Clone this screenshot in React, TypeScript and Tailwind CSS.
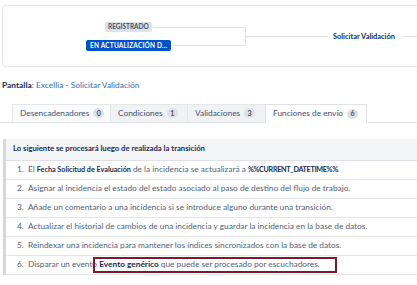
import React from "react";

const Badge = ({ n }: { n: number }) => (
  <span className="ml-[4px] inline-flex h-[10px] min-w-[11px] items-center justify-center rounded-full bg-[#dfe1e6] px-[3px] text-[7px] font-bold text-[#42526e]">
    {n}
  </span>
);

const tabs = [
  { label: "Desencadenadores", count: 0, w: "w-[98px]", bg: "bg-[#fafbfc]" },
  { label: "Condiciones", count: 1, w: "w-[77px]", bg: "bg-[#f1f2f4]" },
  { label: "Validaciones", count: 3, w: "w-[78px]", bg: "bg-[#f1f2f4]" },
];

const rows: React.ReactNode[] = [
  <>
    El <b className="text-[7.2px] text-[#172b4d]">Fecha Solicitud de Evaluación</b> de la incidencia se actualizará a{" "}
    <b className="text-[7.2px] tracking-[-0.3px] text-[#172b4d]">%%CURRENT_DATETIME%%</b>.
  </>,
  <>Asignar al incidencia el estado del estado asociado al paso de destino del flujo de trabajo.</>,
  <>Añade un comentario a una incidencia si se introduce alguno durante una transición.</>,
  <>Actualizar el historial de cambios de una incidencia y guardar la incidencia en la base de datos.</>,
  <>Reindexar una incidencia para mantener los índices sincronizados con la base de datos.</>,
  <>
    Disparar un evento <b className="text-[#172b4d]">Evento genérico</b> que puede ser procesado por escuchadores.
  </>,
];

export default function App() {
  return (
    <div
      className="relative h-[285px] w-[417px] overflow-hidden bg-white text-[#42526e]"
      style={{ fontFamily: "Lato, 'Liberation Sans', sans-serif" }}
    >
      {/* workflow diagram */}
      <div className="ml-[2px] mt-[5px] h-[62px] w-[440px] rounded-[4px] border border-[#e4e6ea]">
        <div className="relative h-full w-full">
          <svg className="absolute left-0 top-0" width="440" height="60">
            <g stroke="#dfe1e6" strokeWidth="1" fill="none">
              <path d="M150 21.5 H242.5 V39.5 H170" />
              <path d="M242.5 30.5 H325" />
              <path d="M399 30.5 H440" />
            </g>
          </svg>
          <span className="absolute left-[102px] top-[16px] flex h-[10px] items-center rounded-[2px] bg-[#dfe1e6] px-[3px] text-[6.5px] font-bold uppercase text-[#42526e]">
            Registrado
          </span>
          <span className="absolute left-[83px] top-[34px] flex h-[11px] items-center rounded-[2px] bg-[#0052cc] px-[4px] text-[6.5px] font-bold uppercase tracking-[0.2px] text-white">
            En actualización d...
          </span>
          <span className="absolute left-[330px] top-[25px] text-[7.4px] font-bold text-[#172b4d]">
            Solicitar Validación
          </span>
        </div>
      </div>

      <div className="ml-[2px] mt-[12px] text-[8.4px]">
        <span className="font-bold text-[#172b4d]">Pantalla</span>:{" "}
        <span className="text-[#3b6cb4]">Excellia - Solicitar Validación</span>
      </div>

      {/* tabs */}
      <div className="mt-[12px] flex h-[19px] border-b border-[#dfe1e6] pl-[12px] text-[8.3px]">
        {tabs.map((t) => (
          <div
            key={t.label}
            className={`flex ${t.w} ${t.bg} items-center border-l border-t border-[#e4e6ea] pl-[7px]`}
          >
            {t.label}
            <Badge n={t.count} />
          </div>
        ))}
        <div className="-mb-px flex w-[102px] items-center border-x border-t border-[#dfe1e6] bg-white pl-[7px]">
          Funciones de envío
          <Badge n={6} />
        </div>
      </div>

      {/* table */}
      <div className="ml-[3px] mt-[16px] border-l-[3px] border-[#d5d8dd] text-[8.3px]">
        <div className="flex h-[22px] items-center border-b border-[#dfe1e6] bg-[#f4f5f7] pl-[7px] text-[7.7px] font-bold text-[#172b4d]">
          Lo siguiente se procesará luego de realizada la transición
        </div>
        {rows.map((r, i) => (
          <div key={i} className="flex h-[19px] items-center border-b border-[#e4e6ea] pl-[11px] text-[#505f79]">
            <span className="w-[11px]">{i + 1}.</span>
            <span className="whitespace-nowrap">{r}</span>
          </div>
        ))}
      </div>

      {/* annotation */}
      <div className="absolute left-[93px] top-[257px] h-[16px] w-[244px] border-2 border-[#7b1a2c]" />
    </div>
  );
}
